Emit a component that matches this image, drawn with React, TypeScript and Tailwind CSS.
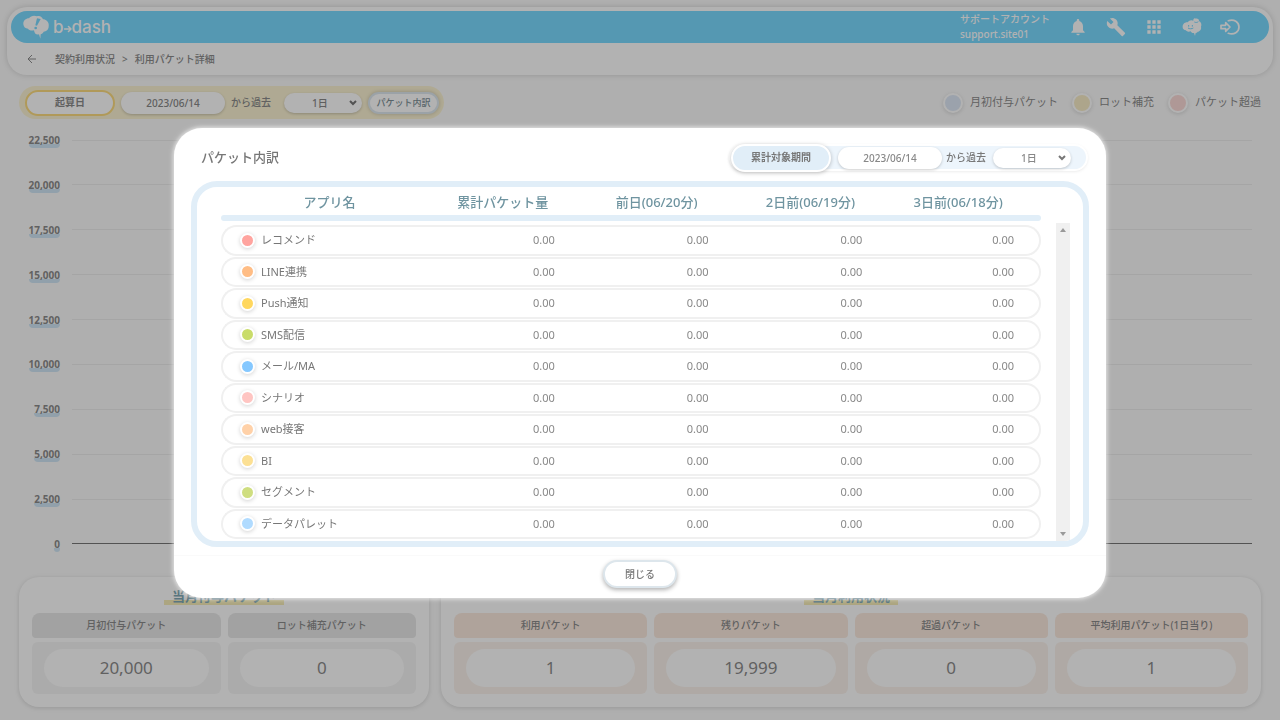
import { useState } from 'react';
import { MdApps, MdBuild, MdNotifications } from 'react-icons/md';

const ticks = ['22,500', '20,000', '17,500', '15,000', '12,500', '10,000', '7,500', '5,000', '2,500', '0'];

const legends = [
  { label: '月初付与パケット', color: 'bg-[#dfe9f6]' },
  { label: 'ロット補充', color: 'bg-[#f8edc8]' },
  { label: 'パケット超過', color: 'bg-[#fbdad7]' },
];

const granted = [
  { label: '月初付与パケット', value: '20,000' },
  { label: 'ロット補充パケット', value: '0' },
];

const used = [
  { label: '利用パケット', value: '1' },
  { label: '残りパケット', value: '19,999' },
  { label: '超過パケット', value: '0' },
  { label: '平均利用パケット(1日当り)', value: '1' },
];

const dayColumns = ['累計パケット量', '前日(06/20分)', '2日前(06/19分)', '3日前(06/18分)'];

const apps = [
  { name: 'レコメンド', color: 'bg-[#ffa49f]' },
  { name: 'LINE連携', color: 'bg-[#ffbd85]' },
  { name: 'Push通知', color: 'bg-[#ffd75e]' },
  { name: 'SMS配信', color: 'bg-[#c9dc6a]' },
  { name: 'メール/MA', color: 'bg-[#85c8ff]' },
  { name: 'シナリオ', color: 'bg-[#ffc5c2]' },
  { name: 'web接客', color: 'bg-[#ffd1a8]' },
  { name: 'BI', color: 'bg-[#fce094]' },
  { name: 'セグメント', color: 'bg-[#cfde80]' },
  { name: 'データパレット', color: 'bg-[#b0dbff]' },
];

function Logo() {
  return (
    <a href="#" aria-label="b→dash" className="flex items-center gap-1 text-white">
      <svg viewBox="0 0 78 72" className="h-6 w-[26px]" fill="currentColor" aria-hidden="true">
        <path d="M1 28C0 18 8 10 18 10C23 2 34 0 42 4C50 1 57 5 60 13C70 13 79 22 77 33C78 43 70 50 62 50C60 55 56 57 53 58L52 71L48 58C40 60 34 56 33 46C24 48 17 45 15 41C7 41 2 36 1 28Z" />
        <path d="M42 10L53 12L42 32L37 31Z" fill="#7adaff" />
        <circle cx="38" cy="39" r="4" fill="#7adaff" />
      </svg>
      <span className="flex items-center font-['Inter','Liberation_Sans',sans-serif] text-[17px] leading-6 font-medium">
        b
        <svg viewBox="0 0 16 16" className="mt-1 h-2 w-2" fill="none" stroke="currentColor" strokeWidth="3" strokeLinecap="round" strokeLinejoin="round" aria-hidden="true">
          <path d="M1 8H14M9 3L14 8L9 13" />
        </svg>
        dash
      </span>
    </a>
  );
}

function HeadIcon() {
  return (
    <svg viewBox="0 0 60 56" className="h-5 w-5" fill="currentColor" aria-hidden="true">
      <path d="M2 29C1 20 8 13 17 14C21 7 29 6 34 9C33 3 38 0 41 3C46 1 52 5 51 10C57 13 60 20 57 27C59 35 53 42 47 42C45 45 42 46 41 46L39 55L36 46C31 47 28 45 26 41C18 44 12 40 12 38C6 37 2 34 2 29Z" />
      <path d="M20 22v5M31 22v5M18 31c4 3 12 3 16 0M37 13c4 2 8 2 12-1" fill="none" stroke="#7adaff" strokeWidth="3" />
    </svg>
  );
}

function ExitIcon() {
  return (
    <svg viewBox="0 0 60 48" className="h-4 w-5" fill="none" stroke="currentColor" strokeWidth="5" aria-hidden="true">
      <path d="M3 19H17V11L30 24L17 37V29H3Z" strokeLinejoin="round" />
      <path d="M25 5C42-1 57 9 57 24S42 49 25 43" strokeLinecap="round" />
    </svg>
  );
}

function DaySelect({ label }: { label: string }) {
  return (
    <div className="relative">
      <select
        aria-label={label}
        defaultValue="1"
        className="block h-5 w-[78px] appearance-none rounded-full bg-white pl-7 text-[10px] leading-5 text-[#888] shadow-[0_1px_3px_rgba(0,0,0,0.2)]"
      >
        <option value="1">1日</option>
        <option value="7">7日</option>
        <option value="30">30日</option>
      </select>
      <svg viewBox="0 0 8 6" className="pointer-events-none absolute top-[7px] right-[5px] h-[6px] w-2" fill="none" stroke="#777" strokeWidth="2" aria-hidden="true">
        <path d="M1 1L4 4L7 1" />
      </svg>
    </div>
  );
}

function DateInput({ label }: { label: string }) {
  return (
    <input
      type="text"
      aria-label={label}
      defaultValue="2023/06/14"
      className="block h-[22px] w-[104px] rounded-full bg-white text-center text-[10px] text-[#888] shadow-[0_1px_3px_rgba(0,0,0,0.2)]"
    />
  );
}

interface SummaryCardProps {
  title: string;
  items: { label: string; value: string }[];
  tone: 'gray' | 'orange';
}

function SummaryCard({ title, items, tone }: SummaryCardProps) {
  const head = tone === 'gray' ? 'bg-[#e8e8e8]' : 'bg-[#fbeadf]';
  const body = tone === 'gray' ? 'bg-[#f5f5f5]' : 'bg-[#fbf3ed]';
  return (
    <section className="rounded-[20px] bg-white px-[13px] pt-[10px] pb-[13px] shadow-[0_1px_5px_rgba(0,0,0,0.14)]">
      <h2 className="mb-2 text-center text-[13px] leading-[18px] font-bold text-[#7fa9b6]">
        <span className="inline-block bg-linear-to-t from-[#f7edb8] from-25% to-transparent to-25% px-2">{title}</span>
      </h2>
      <div className="flex gap-[7px]">
        {items.map((item) => (
          <dl key={item.label} className="flex-1">
            <dt className={`rounded-t-lg rounded-b-sm text-center text-[10px] leading-[25px] font-medium ${head}`}>{item.label}</dt>
            <dd className={`mt-1 rounded-md px-3 py-[7px] ${body}`}>
              <div className="rounded-full bg-white text-center text-[17px] leading-[38px]">{item.value}</div>
            </dd>
          </dl>
        ))}
      </div>
    </section>
  );
}

function PacketTable() {
  return (
    <div className="flex h-[366px] overflow-hidden rounded-[26px] border-[6px] border-[#e1eef8] pt-[2px] pr-[13px] pl-6">
      <table className="h-[351px] flex-1 table-fixed border-separate border-spacing-x-0 border-spacing-y-px">
        <colgroup>
          <col className="w-1/4" />
          <col className="w-3/16" />
          <col className="w-3/16" />
          <col className="w-3/16" />
          <col className="w-3/16" />
        </colgroup>
        <thead>
          <tr className="h-[24px] text-[13px] leading-5 text-[#6f94a0]">
            <th scope="col" className="h-[24px] p-0 pl-3 font-medium">アプリ名</th>
            {dayColumns.map((column) => (
              <th key={column} scope="col" className="h-[24px] p-0 font-medium last:pr-3">{column}</th>
            ))}
          </tr>
          <tr className="h-[9px]">
            <td colSpan={5} className="h-[9px] p-0 align-top">
              <div className="h-[6px] rounded-full bg-[#e1eef8]" />
            </td>
          </tr>
        </thead>
        <tbody>
          {apps.map((app) => (
            <tr key={app.name} className="text-[11px] leading-4">
              <td className="rounded-l-full border-2 border-r-0 border-[#f0f0f0] py-1 pl-[17px]">
                <div className="flex items-center gap-[6px]">
                  <span className={`size-[15px] rounded-full border-2 border-white shadow-[0_1px_4px_rgba(0,0,0,0.18)] ${app.color}`} />
                  {app.name}
                </div>
              </td>
              {dayColumns.map((column) => (
                <td key={column} className="border-y-2 border-[#f0f0f0] py-1 pr-[25px] text-right text-[#888] last:rounded-r-full last:border-r-2">0.00</td>
              ))}
            </tr>
          ))}
        </tbody>
      </table>
      <div className="mt-[34px] ml-[15px] flex w-[14px] flex-col items-center justify-between bg-[#f0f0f0] py-[5px]" aria-hidden="true">
        <svg viewBox="0 0 6 4" className="h-1 w-[6px]" fill="#999"><path d="M0 4L3 0L6 4Z" /></svg>
        <svg viewBox="0 0 6 4" className="h-1 w-[6px]" fill="#999"><path d="M0 0L3 4L6 0Z" /></svg>
      </div>
    </div>
  );
}

export default function App() {
  const [open, setOpen] = useState(true);

  return (
    <div className="min-h-screen bg-[#fbfbfb] pb-3 font-['Noto_Sans','Noto_Sans_CJK_JP',sans-serif] text-[#8c8c8c]">
      <div className="p-[7px]">
        <header className="rounded-[20px] bg-white p-1 shadow-[0_0_6px_rgba(0,0,0,0.16)]">
          <div className="flex h-8 items-center rounded-full bg-[#7adaff] pr-[29px] pl-3 text-white">
            <Logo />
            <div className="ml-auto text-[10px] leading-[15px] font-medium">
              <p>サポートアカウント</p>
              <p>support.site01</p>
            </div>
            <nav className="ml-[18px] flex items-center gap-[18px]">
              <button type="button" aria-label="お知らせ"><MdNotifications className="size-5" /></button>
              <button type="button" aria-label="設定"><MdBuild className="size-5" /></button>
              <button type="button" aria-label="アプリ一覧"><MdApps className="size-5" /></button>
              <button type="button" aria-label="サポート"><HeadIcon /></button>
              <button type="button" aria-label="ログアウト"><ExitIcon /></button>
            </nav>
          </div>
          <nav className="flex h-7 items-center pt-1 pl-4 text-[10px] font-medium">
            <a href="#" aria-label="戻る" className="mr-[18px]">
              <svg viewBox="0 0 10 10" className="size-[10px]" fill="none" stroke="currentColor" aria-hidden="true">
                <path d="M9 5H1M5 1L1 5L5 9" />
              </svg>
            </a>
            <a href="#">契約利用状況</a>
            <span className="mx-[7px]">&gt;</span>
            <span>利用パケット詳細</span>
          </nav>
        </header>
      </div>

      <main className="px-[19px]">
        <div className="flex items-center justify-between pt-1">
          <div className="flex h-[33px] items-center rounded-full bg-[#fbf3d3] pr-[5px] pl-[6px] text-[10px] font-medium">
            <button type="button" className="h-[26px] w-[90px] rounded-full border-2 border-[#fcdc80] bg-white font-bold">起算日</button>
            <div className="ml-[6px]"><DateInput label="起算日" /></div>
            <span className="mx-[6px]">から過去</span>
            <div className="ml-[7px]"><DaySelect label="過去日数" /></div>
            <button type="button" onClick={() => setOpen(true)} className="ml-[6px] h-[22px] w-[71px] rounded-full border-2 border-[#dfe9f0] bg-white text-[9px] text-[#7d9097] shadow-[0_0_4px_rgba(0,0,0,0.2)]">
              パケット内訳
            </button>
          </div>
          <ul className="flex gap-[14px] text-[11px]">
            {legends.map((legend) => (
              <li key={legend.label} className="flex items-center gap-[7px]">
                <span className={`size-5 rounded-full border-2 border-white shadow-[0_1px_4px_rgba(0,0,0,0.14)] ${legend.color}`} />
                {legend.label}
              </li>
            ))}
          </ul>
        </div>

        <div className="mt-[11px] flex h-[424px] flex-col justify-between pr-[9px] pl-[7px]">
          {ticks.map((tick) => (
            <div key={tick} className="flex h-5 items-center gap-3">
              <div className="w-[34px] text-right text-[10px] leading-4 font-bold">
                <span className="inline-block rounded-sm bg-linear-to-t from-[#d0e6f5] from-25% to-transparent to-25%">{tick}</span>
              </div>
              <div className={tick === '0' ? 'h-px flex-1 bg-[#777]' : 'h-px flex-1 bg-[#ededed]'} />
            </div>
          ))}
        </div>

        <div className="mt-[23px] grid grid-cols-[1fr_2fr] gap-3">
          <SummaryCard title="当月付与パケット" items={granted} tone="gray" />
          <SummaryCard title="当月利用状況" items={used} tone="orange" />
        </div>
      </main>

      {open && (
        <div className="fixed inset-0 flex items-start justify-center bg-black/30 pt-32">
          <div role="dialog" aria-modal="true" aria-labelledby="breakdown-title" className="w-full max-w-[932px] rounded-[28px] bg-white text-[#777] shadow-[0_0_4px_1px_rgba(255,255,255,0.7)]">
            <div className="flex h-[53px] items-center justify-between pt-[6px] pr-5 pl-[27px]">
              <h1 id="breakdown-title" className="text-[13px] font-medium">パケット内訳</h1>
              <div className="flex h-[23px] items-center rounded-full bg-[#edf5fc] pr-[15px] text-[10px] font-medium shadow-[0_1px_4px_rgba(0,0,0,0.2)] ring-2 ring-white">
                <button type="button" className="h-7 w-[100px] rounded-full border-2 border-white bg-[#e1eef8] font-bold shadow-[0_1px_4px_rgba(0,0,0,0.25)]">累計対象期間</button>
                <div className="ml-[7px]"><DateInput label="累計対象期間" /></div>
                <span className="mr-[7px] ml-1">から過去</span>
                <DaySelect label="累計日数" />
              </div>
            </div>
            <div className="px-[17px]">
              <PacketTable />
            </div>
            <div className="mt-2 flex justify-center border-t border-[#fafafa] pt-1 pb-[10px]">
              <button type="button" onClick={() => setOpen(false)} className="h-7 w-[74px] rounded-full border-2 border-[#dde6ec] bg-white text-[10px] font-medium shadow-[0_2px_4px_rgba(0,0,0,0.3)]">
                閉じる
              </button>
            </div>
          </div>
        </div>
      )}
    </div>
  );
}
